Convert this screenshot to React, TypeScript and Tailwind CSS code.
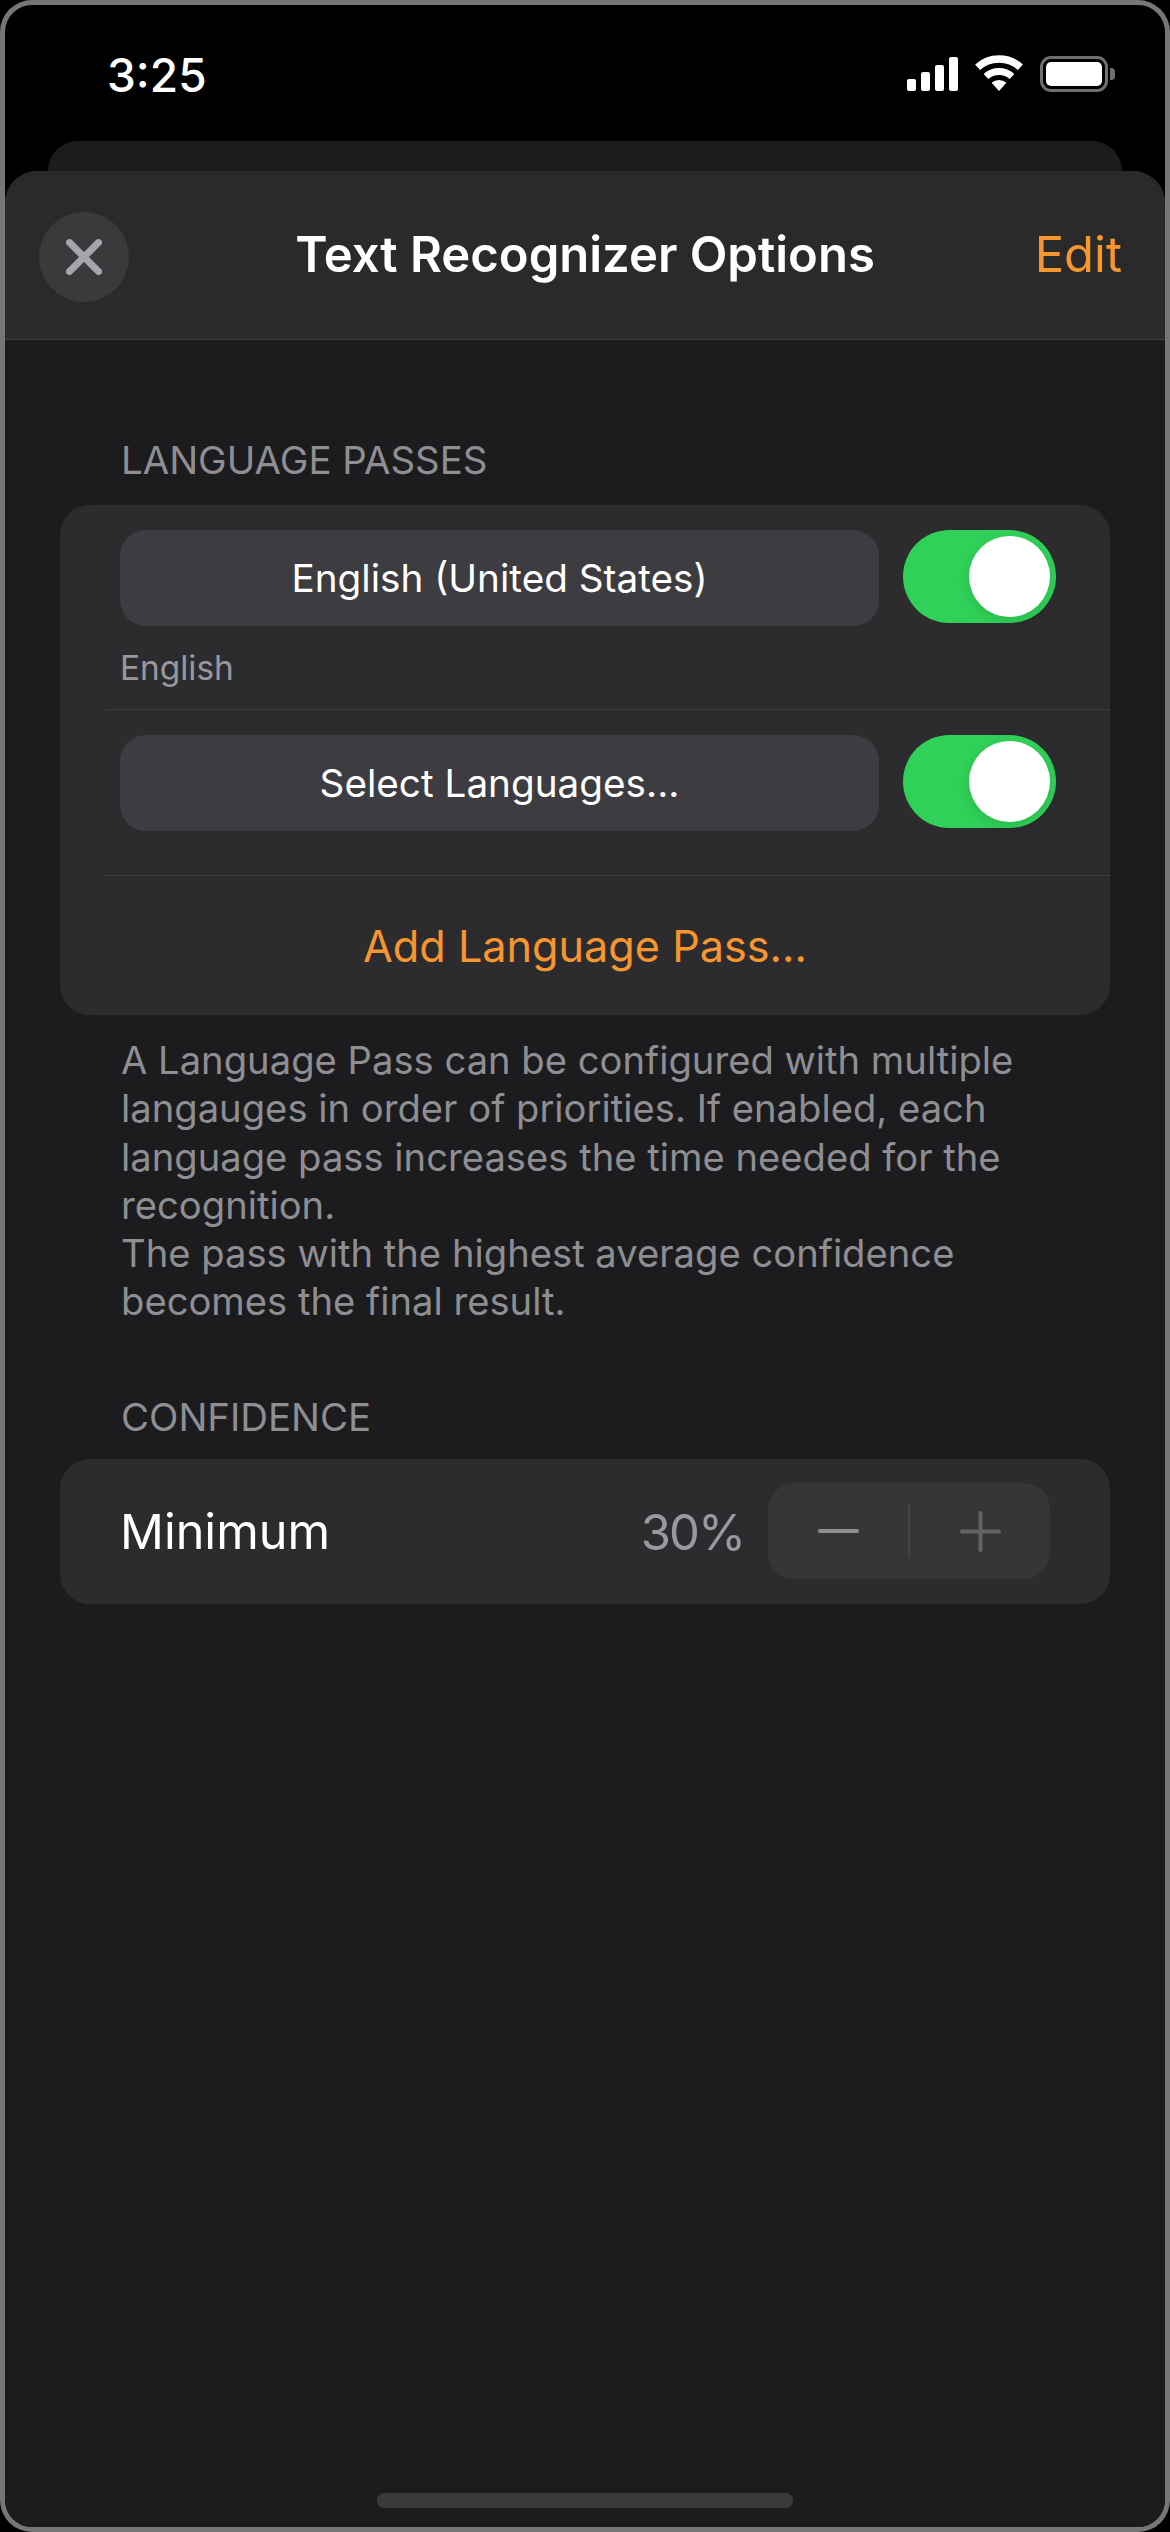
import React from 'react';

const sans = "font-['Inter','Liberation_Sans',sans-serif]";

const StatusIcons = () => (
  <div className="flex items-start">
    {/* signal */}
    <div className="flex items-end gap-[5px] h-[34px] mt-[1px]">
      <div className="w-[9px] h-[12px] rounded-[2px] bg-white" />
      <div className="w-[9px] h-[19px] rounded-[2px] bg-white" />
      <div className="w-[9px] h-[26px] rounded-[2px] bg-white" />
      <div className="w-[9px] h-[34px] rounded-[2px] bg-white" />
    </div>
    {/* wifi */}
    <svg className="ml-[17px] -mt-[1px]" width="48" height="36" viewBox="0 0 48 36" fill="none">
      <path d="M2.600 12.200A32 32 0 0 1 45.400 12.200" stroke="#fff" strokeWidth="7.500" />
      <path d="M11 21.500A19.500 19.500 0 0 1 37 21.500" stroke="#fff" strokeWidth="7" />
      <path d="M24 36L16.600 27.800A11 11 0 0 1 31.400 27.800Z" fill="#fff" />
    </svg>
    {/* battery */}
    <div className="ml-[17px] flex items-center">
      <div className="w-[68px] h-[36px] rounded-[11px] border-[3px] border-[#6f6f71] p-[3px]">
        <div className="w-full h-full rounded-[5px] bg-white" />
      </div>
      <div className="ml-[2px] w-[5px] h-[12px] rounded-r-[4px] bg-[#6f6f71]" />
    </div>
  </div>
);

const Toggle = () => (
  <div className="flex w-[153px] h-[93px] items-center justify-end rounded-full bg-[#30d158] pr-[6px]">
    <div className="w-[81px] h-[81px] rounded-full bg-white shadow-[0_4px_14px_rgba(0,0,0,0.12)]" />
  </div>
);

const LangButton = ({ label }: { label: string }) => (
  <div className="flex h-[96px] w-[759px] items-center justify-center rounded-[26px] bg-[#3d3d41] text-[38.700px] text-white">
    {label}
  </div>
);

const SectionTitle = ({ children }: { children: React.ReactNode }) => (
  <div className="pl-[116px] text-[38.400px] leading-[45px] text-[#8e8e93]">{children}</div>
);

export default function App() {
  return (
    <div className={`${sans} w-[1170px] h-[2532px] bg-black`}>
      <div className="w-full h-full rounded-[32px] bg-[#767676] p-[5px]">
        <div className="flex flex-col w-full h-full rounded-[27px] overflow-hidden bg-black">
          {/* status bar */}
          <div className="flex h-[136px] shrink-0 items-start justify-between pl-[102px] pr-[50px] pt-[51px]">
            <span className="-mt-[4px] text-[46px] leading-[46px] font-medium text-white">3:25</span>
            <StatusIcons />
          </div>
          <div className="mx-[43px] h-[30px] shrink-0 rounded-t-[32px] bg-[#1c1c1e]" />

          {/* sheet */}
          <div className="flex flex-1 flex-col rounded-t-[32px] overflow-hidden bg-[#1c1c1e]">
            <div className="grid h-[169px] shrink-0 grid-cols-[1fr_auto_1fr] items-center border-b border-[#3d3d3f] bg-[#2a2a2a] px-[34px]">
              <div className="mt-[3px] flex w-[90px] h-[90px] items-center justify-center rounded-full bg-[#3a3a3c]">
                <svg width="36" height="36" viewBox="0 0 36 36">
                  <path d="M3.500 3.500L32.500 32.500M32.500 3.500L3.500 32.500" stroke="#a5a5ab" strokeWidth="7" strokeLinecap="round" />
                </svg>
              </div>
              <span className="text-[49px] font-semibold text-white">Text Recognizer Options</span>
              <span className="mr-[9px] justify-self-end text-[49px] text-[#f7962f]">Edit</span>
            </div>

            <div className="pt-[98px]">
              <SectionTitle>LANGUAGE PASSES</SectionTitle>
            </div>

            <div className="mx-[55px] mt-[22px] rounded-[30px] bg-[#2c2c2e]">
              <div className="pl-[60px] pt-[25px]">
                <div className="flex items-start gap-[24px]">
                  <LangButton label="English (United States)" />
                  <Toggle />
                </div>
                <div className="mt-[22px] text-[33.400px] leading-[40px] text-[#98989e]">English</div>
              </div>
              <div className="mt-[21px] ml-[45px] border-t border-[#3d3d3f] pl-[15px] pt-[25px] pb-[44px]">
                <div className="flex items-start gap-[24px]">
                  <LangButton label="Select Languages..." />
                  <Toggle />
                </div>
              </div>
              <div className="ml-[45px] flex h-[140px] items-center justify-center border-t border-[#3d3d3f] pr-[45px] pt-[2px] text-[43.200px] text-[#f7962f]">
                Add Language Pass...
              </div>
            </div>

            <div className="mt-[21px] pl-[116px] pr-[90px] text-[38.200px] leading-[48.300px] text-[#8e8e93]">
              A Language Pass can be configured with multiple langauges in order of priorities. If enabled, each language pass increases the time needed for the recognition.
              <br />
              The pass with the highest average confidence becomes the final result.
            </div>

            <div className="pt-[69px]">
              <SectionTitle>CONFIDENCE</SectionTitle>
            </div>

            <div className="mx-[55px] mt-[19px] flex h-[145px] items-center rounded-[30px] bg-[#2c2c2e] pl-[60px] pr-[60px]">
              <span className="mt-[2px] text-[48.600px] text-white">Minimum</span>
              <span className="ml-auto mt-[2px] text-[49px] tracking-[-2px] text-[#98989e]">30%</span>
              <div className="ml-[24px] flex w-[282px] h-[96px] items-center rounded-[26px] bg-[#363638]">
                <div className="flex flex-1 items-center justify-center">
                  <div className="w-[41px] h-[4px] rounded-full bg-[#8f8f8f]" />
                </div>
                <div className="w-[2px] h-[54px] bg-[#444446]" />
                <div className="flex flex-1 items-center justify-center">
                  <svg width="41" height="41" viewBox="0 0 41 41">
                    <path d="M2 20.500H39M20.500 2V39" stroke="#636366" strokeWidth="4" strokeLinecap="round" />
                  </svg>
                </div>
              </div>
            </div>

            <div className="mt-auto mb-[19px] mx-auto w-[416px] h-[15px] rounded-[7px] bg-[#3a3a3a]" />
          </div>
        </div>
      </div>
    </div>
  );
}
